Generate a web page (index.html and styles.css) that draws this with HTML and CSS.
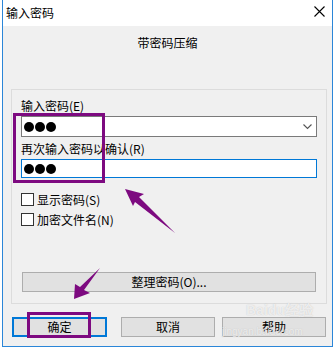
FILE: index.html
```html
<!DOCTYPE html>
<html lang="zh-CN">
<head>
    <meta charset="UTF-8">
    <title>输入密码</title>
    <link rel="stylesheet" href="styles.css">
</head>
<body>
    <div class="window">
        <div class="titlebar">
            <span class="title">输入密码</span>
            <svg class="close" width="11" height="11" viewBox="0 0 11 11">
                <path d="M0.5 0.5 L10.5 10.5 M10.5 0.5 L0.5 10.5" stroke="#000" stroke-width="1.1" fill="none"/>
            </svg>
        </div>
        <div class="client">
            <div class="heading">带密码压缩</div>

            <div class="group">
                <div class="label">输入密码(E)</div>
                <div class="combo">
                    <span class="dots"><i></i><i></i><i></i></span>
                    <svg class="chevron" width="9" height="6" viewBox="0 0 9 6">
                        <path d="M0.5 0.5 L4.5 4.5 L8.5 0.5" stroke="#555" stroke-width="1.1" fill="none"/>
                    </svg>
                </div>
                <div class="label second">再次输入密码以确认(R)</div>
                <div class="field">
                    <span class="dots"><i></i><i></i><i></i></span>
                </div>

                <label class="check first"><span class="box"></span>显示密码(S)</label>
                <label class="check"><span class="box"></span>加密文件名(N)</label>

                <div class="wide-btn">整理密码(O)...</div>
            </div>

            <div class="buttons">
                <div class="btn default">确定</div>
                <div class="btn cancel">取消</div>
                <div class="btn help">帮助</div>
            </div>
        </div>
    </div>

    <!-- annotation layer -->
    <svg class="marks" width="336" height="349" viewBox="0 0 336 349">
        <rect x="14.5" y="114.5" width="89" height="67" fill="none" stroke="#7d0a80" stroke-width="3"/>
        <rect x="28.5" y="313.5" width="61" height="23" fill="none" stroke="#7d0a80" stroke-width="3"/>
        <polygon points="125,189 144,194 139,197 175,233 135,202 133,206" fill="#7d0a80"/>
        <polygon points="100,268 84,290 90,293 74,299 75,284 80,287" fill="#7d0a80"/>
    </svg>
    <div class="watermark">
        <span class="wm-logo">Baidu经验</span>
        <span class="wm-url">jingyan.baidu.com</span>
    </div>
</body>
</html>
```

FILE: styles.css
```css
body {
    margin: 0;
    background: #fff;
    font-family: "Noto Sans CJK SC", "Noto Sans", sans-serif;
    font-size: 12px;
    color: #000;
    position: relative;
    width: 336px;
    height: 349px;
    overflow: hidden;
}

.window {
    margin-left: 2px;
    width: 331px;
    box-sizing: border-box;
    border: 1px solid #2b86d8;
    border-top: none;
    background: #fff;
}

.titlebar {
    height: 26px;
    display: flex;
    align-items: center;
    justify-content: space-between;
    padding: 0 7px 0 3px;
    background: #fff;
}

.title {
    line-height: 14px;
    margin-top: -1px;
}

.close {
    margin-top: -3px;
}

.client {
    background: #f0f0f0;
    height: 320px;
    padding: 10px 5px 0 8px;
    box-sizing: border-box;
}

.heading {
    text-align: center;
    line-height: 14px;
    height: 14px;
    margin-left: -3px;
}

.group {
    margin-top: 39px;
    border: 1px solid #dcdcdc;
    padding: 9px 9px 11px 9px;
}

.label {
    line-height: 14px;
    height: 14px;
}

.label.second {
    margin-top: 5px;
}

.combo,
.field {
    margin-top: 3px;
    background: #fff;
    display: flex;
    align-items: center;
    justify-content: space-between;
    padding: 0 4px 0 2px;
}

.combo {
    height: 21px;
    border: 1px solid #7a7a7a;
    box-sizing: border-box;
}

.field {
    height: 19px;
    border: 1px solid #0078d7;
    box-sizing: border-box;
}

.dots {
    display: flex;
    gap: 1px;
}

.dots i {
    display: block;
    width: 10px;
    height: 10px;
    border-radius: 50%;
    background: #000;
}

.check {
    display: flex;
    align-items: center;
    height: 13px;
    line-height: 13px;
    margin-top: 7px;
}

.check.first {
    margin-top: 15px;
}

.box {
    width: 13px;
    height: 13px;
    box-sizing: border-box;
    border: 1px solid #333;
    background: #fff;
    margin-right: 3px;
}

.wide-btn {
    margin-top: 46px;
    height: 20px;
    margin-left: 1px;
    margin-right: 1px;
    box-sizing: border-box;
    border: 1px solid #adadad;
    background: #e1e1e1;
    text-align: center;
    line-height: 18px;
}

.buttons {
    display: flex;
    margin-top: 13px;
    margin-left: 1px;
}

.btn {
    height: 20px;
    box-sizing: border-box;
    border: 1px solid #adadad;
    background: #e1e1e1;
    text-align: center;
    line-height: 18px;
}

.btn.default {
    width: 95px;
    border: 2px solid #0078d7;
    line-height: 16px;
}

.btn.cancel {
    width: 94px;
    margin-left: 14px;
}

.btn.help {
    width: 104px;
    margin-left: 7px;
}

.marks {
    position: absolute;
    left: 0;
    top: 0;
    pointer-events: none;
}

.watermark {
    position: absolute;
    left: 246px;
    top: 302px;
    display: flex;
    flex-direction: column;
    color: rgba(255, 255, 255, 0.7);
    text-shadow: 0 0 1px rgba(160, 160, 160, 0.6);
    font-family: "Liberation Sans", sans-serif;
    pointer-events: none;
}

.wm-logo {
    font-size: 14px;
    font-weight: bold;
    line-height: 16px;
}

.wm-url {
    font-size: 10px;
    line-height: 12px;
    margin-left: -24px;
    margin-top: 8px;
}
```
